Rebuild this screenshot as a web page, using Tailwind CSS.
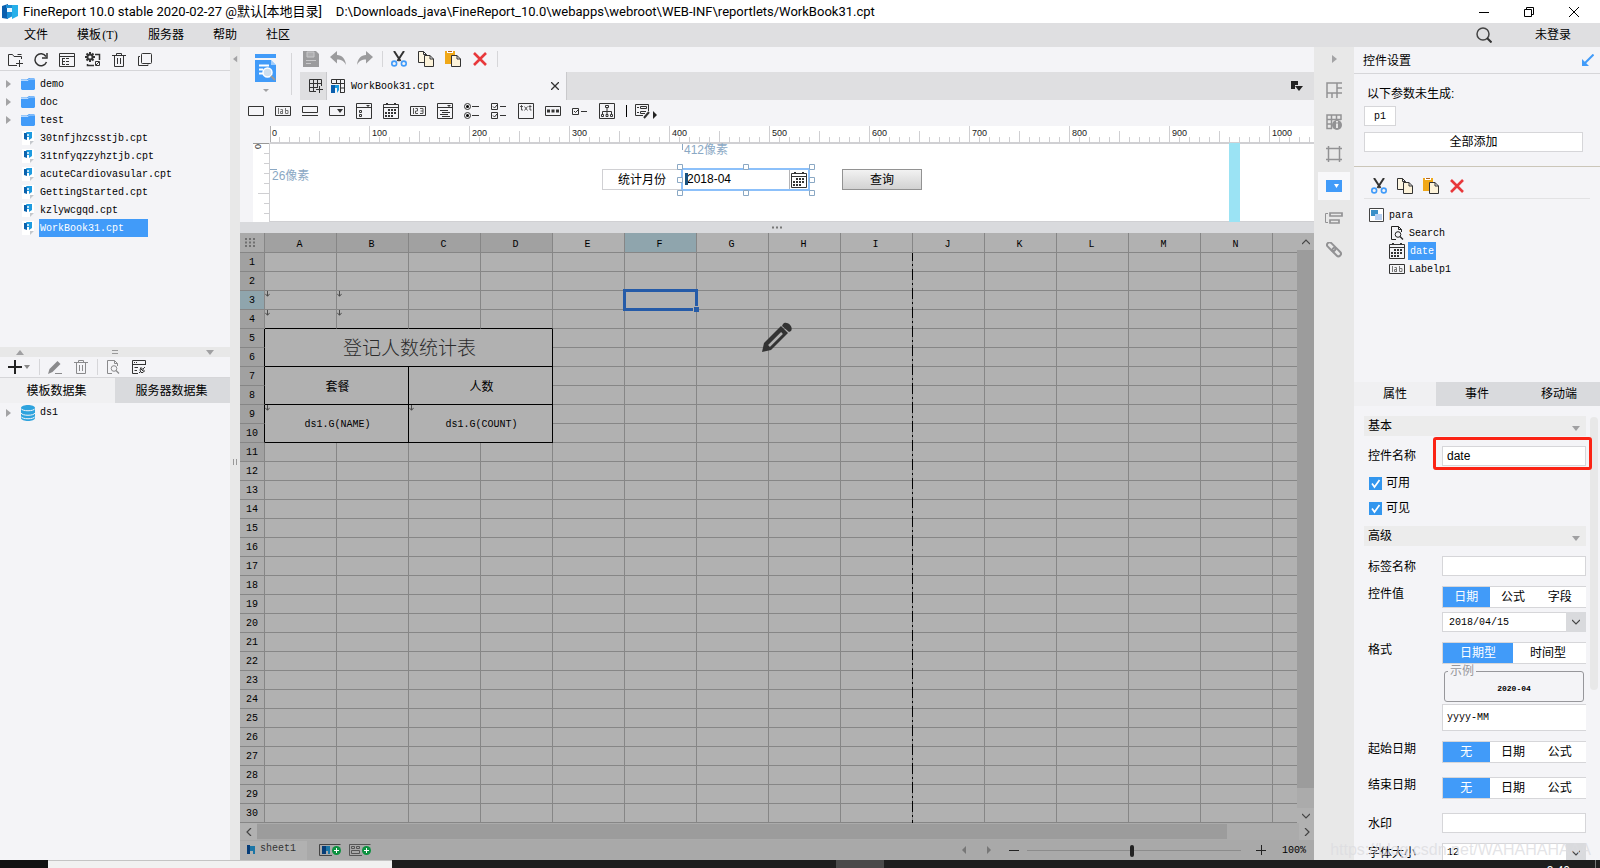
<!DOCTYPE html>
<html lang="zh-CN">
<head>
<meta charset="utf-8">
<title>FineReport 10.0</title>
<script src="https://cdn.jsdelivr.net/npm/@tailwindcss/browser@4"></script>
</head>
<body class="h-screen overflow-hidden flex flex-col bg-[#f4f4f7] text-black text-[12px] leading-[14px] font-['Liberation_Sans','Noto_Sans_CJK_SC',sans-serif]">

<svg class="hidden" aria-hidden="true">
  <symbol id="logo" viewBox="0 0 16 16"><path d="M0 2l6-2v4H5v5h1v6l-6-1z" fill="#0a5fae"/><path d="M4 1h12v3H4z" fill="#1b8fd6"/><path d="M5 8h6v4l-6 3z" fill="#1b8fd6"/><path d="M5 4h5v4H5z" fill="#e9f6ff"/><path d="M10 1h6v11l-6 3z" fill="#27b0ea"/></symbol>
  <symbol id="folder" viewBox="0 0 14 12"><path d="M0 1.5h6l2-1.5h5l1 1v10l-1 1H1l-1-1z" fill="#419bf9"/><path d="M0 2.500h7l1.500-1.500h5.500" fill="none" stroke="#d5e9ff" stroke-width=".8"/></symbol>
  <symbol id="cpt" viewBox="0 0 12 14"><path d="M0 0h12v10l-4 4H0z" fill="#fff"/><path d="M8 14v-4h4z" fill="#c4c7cc"/><path d="M2 2h3v7l-3-1z" fill="#0a62ae"/><path d="M4 1h6v6l-3 2V6H5V3z" fill="#1d9be0"/><path d="M5 3h2v2H5z" fill="#bfe4fa"/></symbol>
  <symbol id="tri" viewBox="0 0 6 8"><path d="M1 0l5 4-5 4z" fill="#a3a3a5"/></symbol>
  <symbol id="down" viewBox="0 0 8 5"><path d="M0 0h8L4 5z" fill="#a0a0a2"/></symbol>
  <symbol id="cut" viewBox="0 0 16 16"><path d="M3 0l6.500 10M13 0L6.500 10" stroke="#333" stroke-width="2" fill="none"/><circle cx="3.200" cy="12.500" r="2.400" fill="none" stroke="#419bf9" stroke-width="1.600"/><circle cx="12.800" cy="12.500" r="2.400" fill="none" stroke="#419bf9" stroke-width="1.600"/></symbol>
  <symbol id="copy" viewBox="0 0 16 16"><path d="M.5.5h5l3 3v8h-8zM5.500.5v3h3" fill="#fdf6e3" stroke="#333"/><path d="M6.500 4.500h5.500l3.500 3.500v7.500h-9zM12 4.500V8h3.500" fill="#fdf3da" stroke="#333"/></symbol>
  <symbol id="paste" viewBox="0 0 16 16"><path d="M0 0h10v13H0z" fill="#f0a818"/><path d="M2 0h6v2H2z" fill="#fff"/><path d="M3 0h4v1H3z" fill="#b5651d"/><path d="M6.500 4.500h5.500l3.500 3.500v7.500h-9zM12 4.500V8h3.500" fill="#fdf3da" stroke="#333"/></symbol>
  <symbol id="del" viewBox="0 0 14 14"><path d="M1 1l12 12M13 1L1 13" stroke="#e8383b" stroke-width="2.600"/></symbol>
  <symbol id="cal" viewBox="0 0 16 16"><path d="M.5 1.500h15v14H.5zM.5 4.500h15" fill="none" stroke="#333"/><path d="M3 0h2v2H3zM11 0h2v2h-2z" fill="#333"/><path d="M5 7h8M2 10h11M2 13h8" stroke="#333" stroke-width="2" stroke-dasharray="2 1"/></symbol>
  <symbol id="lab" viewBox="0 0 16 10"><path d="M.5.5h15v9H.5z" fill="none" stroke="#333"/><path d="M3.500 2v6M5.500 3.500h2V8M8 7.500H5.500v-2H7M10.500 2v5.500H13v-3h-2" fill="none" stroke="#777"/></symbol>
  <symbol id="trash" viewBox="0 0 14 14"><path d="M0 2.500h14M4.500 2V.5h5V2M2.500 3v10.500h9V3M5.500 5v6M8.500 5v6" fill="none" stroke="currentColor"/></symbol>
  <symbol id="docsearch" viewBox="0 0 14 14"><path d="M6 13.500H1.500V.5h7l3 3V6M8.500.5v3h3" fill="none" stroke="currentColor"/><circle cx="8" cy="8.500" r="2.800" fill="none" stroke="currentColor"/><path d="M10 10.500l3 3" stroke="currentColor" stroke-width="1.300"/></symbol>
  <symbol id="chev" viewBox="0 0 8 6"><path d="M0 1l4 4 4-4" fill="none" stroke="#444" stroke-width="1.200"/></symbol>
  <symbol id="arrowdown" viewBox="0 0 5 6"><path d="M2.500 0v5M.3 2.800L2.500 5.300l2.200-2.500" fill="none" stroke="#4c4c4c"/></symbol>
</svg>

<header class="shrink-0">
  <div class="h-[23px] bg-white flex items-center pl-[2px] pr-[21px] font-['Roboto','Noto_Sans_CJK_SC',sans-serif] text-[13px]">
    <svg class="w-4 h-4"><use href="#logo"/></svg>
    <h1 class="ml-[5px]">FineReport 10.0 stable 2020-02-27 @默认[本地目录]</h1>
    <span class="ml-[14px]">D:\Downloads_java\FineReport_10.0\webapps\webroot\WEB-INF\reportlets/WorkBook31.cpt</span>
    <div class="ml-auto flex items-center gap-[35px]">
      <button aria-label="最小化"><svg width="10" height="10"><path d="M0 5.500h10" stroke="#000"/></svg></button>
      <button aria-label="还原"><svg width="10" height="10"><path d="M.5 2.500h7v7h-7zM2.500 2V.5h7v7H8" fill="none" stroke="#000"/></svg></button>
      <button aria-label="关闭"><svg width="10" height="10"><path d="M0 0l10 10M10 0L0 10" stroke="#000"/></svg></button>
    </div>
  </div>
  <nav class="h-6 bg-[#dfdfe1] flex items-center gap-[29px] pl-6 pr-[29px]">
    <button>文件</button>
    <button class="flex">模板<span class="text-[12px] font-['Liberation_Serif'] w-[18px] text-center">(T)</span></button>
    <button>服务器</button>
    <button>帮助</button>
    <button>社区</button>
    <button class="ml-auto" aria-label="搜索"><svg width="16" height="16"><circle cx="7" cy="7" r="6" fill="none" stroke="#444" stroke-width="1.500"/><path d="M11 11l4.500 4.500" stroke="#333" stroke-width="2"/></svg></button>
    <button class="ml-[14px]">未登录</button>
  </nav>
</header>

<div class="flex-1 min-h-0 flex">

  <!-- Template and data set trees -->
  <aside class="w-[230px] shrink-0 flex flex-col">
    <div class="h-6 shrink-0 border-b border-[#d6d6d9] flex items-center gap-[10px] pl-[7px] pt-[2px] text-[#333]">
      <button aria-label="新建文件夹"><svg width="16" height="16"><path d="M10 13.500H1.500v-11h4l1.500 2h7.500V7M14.500 2.500h-4" fill="none" stroke="#333"/><path d="M9 11.500h7M12.500 8v7" stroke="#333"/></svg></button>
      <button aria-label="刷新"><svg width="16" height="16"><path d="M13 4.500A6 6 0 1 0 13.500 10" fill="none" stroke="#333" stroke-width="1.500"/><path d="M14 1v5H9" fill="none" stroke="#333" stroke-width="1.500"/></svg></button>
      <button aria-label="目录"><svg width="16" height="16"><path d="M.5 1.500h15v13H.5zM.5 4.500h15M3 6.500h3M3.500 7v5.500M3 9.500h3M3 12.500h3M7 6.500h3M7 9.500h3M7 12.500h3" fill="none" stroke="#333"/></svg></button>
      <button aria-label="配置"><svg width="16" height="16"><path d="M5 0v10M0 5h10M1.500 1.500l7 7M8.500 1.500l-7 7" stroke="#333" stroke-width="2"/><circle cx="5" cy="5" r="3.500" fill="#333"/><circle cx="5" cy="5" r="1.600" fill="#f4f4f7"/><path d="M10 2.500h4.500V8M2.500 12v1.500H9" fill="none" stroke="#333" stroke-width="1.500"/><path d="M10.500 9.500h4v4h-4zM11 13l3-3" fill="none" stroke="#333"/></svg></button>
      <button aria-label="删除"><svg class="w-[14px] h-[14px] mx-px"><use href="#trash"/></svg></button>
      <button aria-label="复制"><svg width="16" height="16"><rect x="4.500" y="1.500" width="10" height="10" rx="1" fill="none" stroke="#333"/><path d="M3 4.500H1.500v9h9.500v-1" fill="none" stroke="#333"/></svg></button>
    </div>
    <div class="flex-[276] min-h-0">
      <ul class="pt-1 pl-[5px] font-['Liberation_Mono'] text-[10px] leading-[18px] [&_span]:h-[18px] [&_span]:pt-px [&_span]:px-px">
        <li class="flex items-center h-[18px]"><svg class="w-[6px] h-2 mr-[10px]"><use href="#tri"/></svg><svg class="w-[14px] h-3 mr-[4px]"><use href="#folder"/></svg><span>demo</span></li>
        <li class="flex items-center h-[18px]"><svg class="w-[6px] h-2 mr-[10px]"><use href="#tri"/></svg><svg class="w-[14px] h-3 mr-[4px]"><use href="#folder"/></svg><span>doc</span></li>
        <li class="flex items-center h-[18px]"><svg class="w-[6px] h-2 mr-[10px]"><use href="#tri"/></svg><svg class="w-[14px] h-3 mr-[4px]"><use href="#folder"/></svg><span>test</span></li>
        <li class="flex items-center h-[18px] pl-[17px]"><svg class="w-3 h-[14px] mr-[5px]"><use href="#cpt"/></svg><span>30tnfjhzcsstjb.cpt</span></li>
        <li class="flex items-center h-[18px] pl-[17px]"><svg class="w-3 h-[14px] mr-[5px]"><use href="#cpt"/></svg><span>31tnfyqzzyhztjb.cpt</span></li>
        <li class="flex items-center h-[18px] pl-[17px]"><svg class="w-3 h-[14px] mr-[5px]"><use href="#cpt"/></svg><span>acuteCardiovasular.cpt</span></li>
        <li class="flex items-center h-[18px] pl-[17px]"><svg class="w-3 h-[14px] mr-[5px]"><use href="#cpt"/></svg><span>GettingStarted.cpt</span></li>
        <li class="flex items-center h-[18px] pl-[17px]"><svg class="w-3 h-[14px] mr-[5px]"><use href="#cpt"/></svg><span>kzlywcgqd.cpt</span></li>
        <li class="flex items-center h-[18px] pl-[17px]"><svg class="w-3 h-[14px] mr-[5px]"><use href="#cpt"/></svg><span class="w-[109px] bg-[#419bf9] text-white">WorkBook31.cpt</span></li>
      </ul>
    </div>
    <div class="h-[10px] shrink-0 bg-[#e8e8e8] flex items-center justify-between px-4">
      <svg class="w-2 h-[5px] rotate-180"><use href="#down"/></svg>
      <svg width="6" height="4"><path d="M0 .5h6M0 3.500h6" stroke="#999"/></svg>
      <svg class="w-2 h-[5px]"><use href="#down"/></svg>
    </div>
    <div class="flex-[503] min-h-0 flex flex-col">
      <div class="h-[21px] shrink-0 border-b border-[#d6d6d9] flex items-center pl-2 text-[#8a8a8c]">
        <button aria-label="添加" class="flex items-center gap-[2px] w-[31px]"><svg width="14" height="14"><path d="M7 0v14M0 7h14" stroke="#222" stroke-width="2"/></svg><svg class="w-[6px] h-1" viewBox="0 0 6 4"><path d="M0 0h6L3 4z" fill="#888"/></svg></button>
        <span class="w-px h-4 bg-[#d6d6d9]"></span>
        <button aria-label="编辑" class="ml-2"><svg width="15" height="15"><path d="M0 14l1.500-5L9.500 1l3 3-8 8z" fill="#8a8a8c"/><path d="M7 13.500h7" stroke="#8a8a8c"/></svg></button>
        <button aria-label="删除" class="ml-[11px]"><svg class="w-[14px] h-[14px]"><use href="#trash"/></svg></button>
        <span class="ml-[9px] w-px h-4 bg-[#d6d6d9]"></span>
        <button aria-label="预览" class="ml-2"><svg class="w-[14px] h-[14px]"><use href="#docsearch"/></svg></button>
        <button aria-label="数据连接" class="ml-[12px]"><svg width="15" height="14"><path d="M6 13.500H.5V.5h13V5M.5 4.500h13M2 2.500h1M4 2.500h1M2.500 7.500H6M2.500 10.500H5" fill="none" stroke="#333"/><path d="M7 13l2-2M8.500 8.500l3 3M13 7l-2 2M9 7.500l3.500 3.500-1.500 1.500H9L8 10z" fill="none" stroke="#333"/></svg></button>
      </div>
      <div class="h-[25px] shrink-0 flex text-[12px]">
        <button class="flex-1 bg-[#f0f0f2] pr-[2px]">模板数据集</button>
        <button class="flex-1 bg-[#d9dadd] pr-[2px]">服务器数据集</button>
      </div>
      <ul class="pl-[5px] font-['Liberation_Mono'] text-[10px]">
        <li class="flex items-center h-[19px]"><svg class="w-[6px] h-2 mr-[10px]"><use href="#tri"/></svg><svg class="mr-[5px]" width="14" height="16"><path d="M0 3c0-4 14-4 14 0v10c0 4-14 4-14 0z" fill="#2ea3de"/><path d="M0 3.500c1 3 13 3 14 0M0 8c1 3 13 3 14 0M0 11.500c1 3 13 3 14 0" fill="none" stroke="#f4f4f7"/></svg>ds1</li>
      </ul>
    </div>
  </aside>
  <div class="w-[10px] shrink-0 bg-[#e8e8e8] flex flex-col items-center justify-between pt-2">
    <svg class="w-[5px] h-2 rotate-180"><use href="#tri"/></svg>
    <svg width="4" height="6"><path d="M.5 0v6M3.500 0v6" stroke="#999"/></svg>
    <span></span>
  </div>

  <!-- Report designer -->
  <main class="flex-1 min-w-0 flex flex-col">
    <div class="h-[53px] shrink-0 flex">
      <button aria-label="预览" class="w-[51px] shrink-0 flex flex-col items-center pt-[7px]"><svg width="21" height="38"><path d="M0 0h21v4H0z" fill="#419bf9"/><path d="M0 6h16l5 5v17H0z" fill="#419bf9"/><path d="M16 6v5h5" fill="#fff" opacity=".5"/><path d="M4 11.500h10M4 15.500h4M4 19.500h4" stroke="#fff" stroke-width="2"/><circle cx="12.500" cy="18.500" r="4.500" fill="#cfdfee" stroke="#fff" stroke-width="1.500"/><path d="M16 22l4 4" stroke="#999" stroke-width="2"/><path d="M8 35h6l-3 3z" fill="#a0a0a2"/></svg></button>
      <span class="w-px h-[42px] mt-[6px] bg-[#d6d6d9]"></span>
      <div class="ml-2 flex-1 min-w-0 flex flex-col">
        <div class="h-[25px] flex items-center pl-[3px] pb-px">
          <button aria-label="保存"><svg width="16" height="16"><path d="M0 0h13l3 3v13H0z" fill="#9b9b9d"/><path d="M4 1h7v5H4zM3 9.500h10M3 12.500h5" fill="#aeaeb0" stroke="#c9c9cb"/></svg></button>
          <button aria-label="撤销" class="ml-[11px]"><svg width="16" height="16"><path d="M7 0v4c5 0 8.500 4 9 10-2-4-4.500-5.500-9-5.500v4L0 6z" fill="#9b9b9d"/></svg></button>
          <button aria-label="重做" class="ml-[11px]"><svg width="16" height="16"><path d="M9 0v4C4 4 .5 8 0 14c2-4 4.500-5.500 9-5.500v4L16 6z" fill="#9b9b9d"/></svg></button>
          <span class="ml-[9px] w-px h-4 bg-[#d6d6d9]"></span>
          <button aria-label="剪切" class="ml-2"><svg class="w-4 h-4"><use href="#cut"/></svg></button>
          <button aria-label="复制" class="ml-[11px]"><svg class="w-4 h-4"><use href="#copy"/></svg></button>
          <button aria-label="粘贴" class="ml-[11px]"><svg class="w-4 h-4"><use href="#paste"/></svg></button>
          <button aria-label="删除" class="ml-3"><svg class="w-[14px] h-[14px]"><use href="#del"/></svg></button>
          <span class="ml-[10px] w-px h-4 bg-[#d6d6d9]"></span>
        </div>
        <div class="h-7 bg-[#dfdfe1] flex items-center">
          <button aria-label="新建模板" class="w-[26px] pl-[9px]"><svg width="15" height="15"><path d="M7 12.500H.5v-12h12V7M.5 4.500h12M.5 8.500h8M4.500.5v12M8.500.5V9" fill="none" stroke="#333"/><path d="M7 10.500h7M10.500 7v7" stroke="#333"/></svg></button>
          <div class="w-[241px] h-7 bg-[#f4f4f7] border-l border-r border-[#c9c9cc] flex items-center pl-1 pr-[7px] font-['Liberation_Mono'] text-[10px]">
            <svg width="14" height="14"><path d="M.5 4V.5h13v13H9M.5 4.500h13M5.500.5V5M9.500.5v13M9 9h4.500" fill="none" stroke="#333"/><path d="M0 6h4v8H0z" fill="#0a5fae"/><path d="M4 6h4v5L6 14V9H4z" fill="#1b9be0"/></svg>
            <span class="ml-[6px] pt-px">WorkBook31.cpt</span>
            <button class="ml-auto" aria-label="关闭标签"><svg width="8" height="8"><path d="M0 0l8 8M8 0L0 8" stroke="#333" stroke-width="1.300"/></svg></button>
          </div>
          <button aria-label="标签列表" class="ml-auto mr-[11px]"><svg width="12" height="10"><path d="M0 0h7v4H4v4H0z" fill="#222"/><path d="M4 5h8L8 10z" fill="#222"/></svg></button>
        </div>
      </div>
    </div>

    <div class="h-[26px] shrink-0 flex items-center gap-[11px] pl-2 pb-[4px] [&>button]:w-4 [&>button]:shrink-0">
      <button aria-label="文本"><svg width="16" height="10"><path d="M.5.5h15v9H.5z" fill="none" stroke="#333"/></svg></button>
      <button aria-label="标签"><svg class="w-4 h-[10px]"><use href="#lab"/></svg></button>
      <button aria-label="按钮"><svg width="16" height="10"><path d="M.5.5h15v6H.5zM0 9.500h16" fill="none" stroke="#333"/></svg></button>
      <button aria-label="下拉框"><svg width="16" height="10"><path d="M.5.5h15v9H.5z" fill="none" stroke="#333"/><path d="M8 3h6l-3 4z" fill="#333"/></svg></button>
      <button aria-label="下拉复选框"><svg width="16" height="16"><path d="M.5.5h15v15H.5zM.5 4.500h15M3.500 7.500h2v2h-2zM3.500 11.500h2v2h-2z" fill="none" stroke="#333"/><path d="M10 2h4l-2 2z" fill="#333"/></svg></button>
      <button aria-label="日期"><svg class="w-4 h-4"><use href="#cal"/></svg></button>
      <button aria-label="数字"><svg width="16" height="10"><path d="M.5.5h15v9H.5z" fill="none" stroke="#333"/><path d="M3.500 2v6M5.500 2.500h2v2.500h-2v2.500H8M10 2.500h3v5h-3M10.500 5H13" fill="none" stroke="#555"/></svg></button>
      <button aria-label="下拉树"><svg width="16" height="16"><path d="M.5.5h15v15H.5zM.5 4.500h15M3 7.500h8M5 9.500h8M3 11.500h8M5 13.500h8" fill="none" stroke="#333"/><path d="M10 2h4l-2 2z" fill="#333"/></svg></button>
      <button aria-label="单选按钮组"><svg width="16" height="16"><circle cx="3.500" cy="3.500" r="3" fill="none" stroke="#333"/><circle cx="3.500" cy="3.500" r="1.500"/><circle cx="3.500" cy="12.500" r="3" fill="none" stroke="#333"/><circle cx="3.500" cy="12.500" r="1.500"/><path d="M8 3.500h7M8 12.500h7" stroke="#333"/></svg></button>
      <button aria-label="复选框组"><svg width="16" height="16"><path d="M.5.5h6v6h-6zM.5 9.500h6v6h-6zM2 3.500l1.500 1.500L6 2M2 12.500L3.500 14 6 11M9 3.500h6M9 12.500h6" fill="none" stroke="#333"/></svg></button>
      <button aria-label="文本域"><svg width="16" height="16"><path d="M.5.5h15v15H.5z" fill="none" stroke="#333"/><path d="M3.500 2v5H5M2 3.500h3M6.500 3.500l3 4M9.500 3.500l-3 4M12 2v5h1.500M10.500 3.500h3" fill="none" stroke="#444" stroke-width=".9"/></svg></button>
      <button aria-label="密码"><svg width="16" height="10"><path d="M.5.5h15v9H.5z" fill="none" stroke="#333"/><path d="M2 5h3M6.500 5h3M11 5h3" stroke="#333" stroke-width="3"/></svg></button>
      <button aria-label="复选框"><svg width="16" height="10"><path d="M.5 2.500h6v6h-6zM2 5l1.500 1.500L6 4M9 5.500h6" fill="none" stroke="#333"/></svg></button>
      <button aria-label="视图树"><svg width="16" height="16"><path d="M.5.5h15v15H.5zM6.500 2.500h3v2h-3zM8 5v6M3.500 11V8.500h9V11M2.500 11.500h2v2h-2zM7 11.500h2v2H7zM11.500 11.500h2v2h-2z" fill="none" stroke="#333"/></svg></button>
      <span class="w-px h-3 bg-black shrink-0 -mr-[3px]"></span>
      <button aria-label="自定义控件"><svg width="16" height="16" class="overflow-visible"><path d="M8 12.500H.5V1.500h13V8M2 4.500h2M5.500 3.500h6v2h-6zM2 9.500h2M11 8.500H5.500v2H10" fill="none" stroke="#333"/><path d="M9 15l5-6" stroke="#333" stroke-width="2"/><path d="M18 8l4 4-4 4z" fill="#222"/></svg></button>
    </div>

    <!-- Parameter pane with rulers -->
    <div class="h-[96px] shrink-0 flex">
      <div class="w-[30px] shrink-0 pt-[17px] pl-[13px]">
        <div class="h-[79px] bg-white border-r border-[#d0d0d3] relative">
          <svg class="absolute inset-0 w-full h-full" aria-hidden="true"><path d="M0 .5h17" stroke="#999"/><path d="M11 10.500h6M11 20.500h6M11 30.500h6M11 40.500h6M5 50.500h12M11 60.500h6M11 70.500h6" stroke="#cfcfd2"/></svg>
          <span class="absolute left-[2px] top-[1px] text-[9px] leading-[6px] [writing-mode:vertical-rl] rotate-180 text-[#333]">0</span>
        </div>
      </div>
      <div class="flex-1 min-w-0 bg-white flex flex-col overflow-hidden">
        <div class="h-[17px] shrink-0 relative border-b border-[#d0d0d3]">
          <svg class="absolute inset-0 w-full h-full" aria-hidden="true">
            <defs><pattern id="ticks" width="100" height="17" patternUnits="userSpaceOnUse" x="-1"><path d="M.5 0v17" stroke="#cfcfd2"/><path d="M50.500 5v12" stroke="#cfcfd2"/><path d="M10.500 11v6M20.500 11v6M30.500 11v6M40.500 11v6M60.500 11v6M70.500 11v6M80.500 11v6M90.500 11v6" stroke="#cfcfd2"/></pattern></defs>
            <rect width="100%" height="17" fill="url(#ticks)"/>
            <path d="M.5 0v17" stroke="#b0b0b2"/>
          </svg>
          <div class="relative flex pl-[2px] pt-[2px] text-[9px] leading-[10px] text-[#222] [&>span]:w-[100px] [&>span]:shrink-0">
            <span>0</span><span>100</span><span>200</span><span>300</span><span>400</span><span>500</span><span>600</span><span>700</span><span>800</span><span>900</span><span>1000</span>
          </div>
        </div>
        <div class="flex-1 relative border-t border-b border-[#d0d0d3]">
          <span class="absolute left-0 top-[25px] w-[7px] h-px bg-[#8aa8c4]"></span>
          <span class="absolute left-[2px] top-[25px] text-[#8aa8c4]">26像素</span>
          <span class="absolute left-[412px] top-0 w-px h-[6px] bg-[#8aa8c4]"></span>
          <span class="absolute left-[414px] top-[-1px] text-[#8aa8c4]">412像素</span>
          <label for="pdate" class="absolute left-[332px] top-[25px] w-[80px] h-[21px] border border-[#d0d0d3] flex items-center justify-center">统计月份</label>
          <div class="absolute left-[411px] top-[24px] w-[129px] h-[23px] border-2 border-[#8cc0fa] bg-white flex items-center">
            <input id="pdate" value="2018-04" class="w-[107px] h-[19px] px-[4px] pb-px bg-transparent outline-none border-r border-[#b4b4b6]">
            <span class="absolute left-[2px] top-[3px] w-[3px] h-3 bg-[#17517f]"></span>
            <svg class="w-4 h-4 ml-px"><use href="#cal"/></svg>
          </div>
          <svg class="absolute left-[407px] top-[20px] overflow-visible" width="138" height="32" aria-hidden="true"><path d="M.5.5h5v5h-5zM66.500.5h5v5h-5zM132.500.5h5v5h-5zM.5 13.500h5v5h-5zM132.500 13.500h5v5h-5zM.5 26.500h5v5h-5zM66.500 26.500h5v5h-5zM132.500 26.500h5v5h-5z" fill="#fff" stroke="#8aa8c4"/></svg>
          <button class="absolute left-[572px] top-[25px] w-[80px] h-[21px] border border-[#929292] bg-linear-to-b from-[#f2f2f2] to-[#d2d2d2] flex items-center justify-center">查询</button>
          <span class="absolute left-[959px] top-[-1px] bottom-[-1px] w-[11px] bg-[#9be3f4]"></span>
        </div>
      </div>
    </div>
    <div class="h-[11px] shrink-0 bg-[#d9dadd] flex items-center justify-center"><svg width="11" height="3"><path d="M0 1.500h11" stroke="#777" stroke-width="2" stroke-dasharray="2 2"/></svg></div>

    <!-- Sheet -->
    <div class="flex-1 min-h-0 flex bg-[#b1b1b1] relative">
      <div class="flex-1 min-w-0 overflow-hidden">
        <table class="w-full table-fixed border-separate border-spacing-0 font-['Liberation_Mono','Noto_Sans_CJK_SC',monospace] text-[10px] leading-[14px] [&_td]:text-center">
          <colgroup id="cols"></colgroup>
          <thead><tr id="head" class="h-5"></tr></thead>
          <tbody id="grid"></tbody>
        </table>
      </div>
      <div class="w-[17px] shrink-0 bg-[#ababab] flex flex-col items-center">
        <button aria-label="向上" class="h-[17px] w-full flex items-center justify-center bg-[#b1b1b1]"><svg class="w-2 h-[6px] rotate-180"><use href="#chev"/></svg></button>
        <div class="flex-1 w-full bg-[#9c9c9c]"></div>
        <button aria-label="向下" class="mt-[20px] h-[15px] w-full flex items-center justify-center bg-[#b1b1b1]"><svg class="w-2 h-[6px]"><use href="#chev"/></svg></button>
      </div>
      <svg class="absolute left-[521px] top-[88px]" width="32" height="32" viewBox="0 0 32 32" aria-hidden="true"><path d="M1 31l2-9L20 5l7 7-17 17z" fill="#333"/><path d="M8 25L21 12" stroke="#b1b1b1" stroke-width="2.500"/><path d="M22 3c3-4 11 2 8 7l-2 1-7-6z" fill="#333"/></svg>
    </div>
    <div class="h-[17px] shrink-0 bg-[#ababab] flex items-center">
      <button aria-label="向左" class="w-[17px] h-[17px] flex items-center justify-center bg-[#b1b1b1]"><svg class="w-2 h-[6px] rotate-90"><use href="#chev"/></svg></button>
      <div class="flex-1 h-[15px] bg-[#9c9c9c]"></div>
      <button aria-label="向右" class="ml-[72px] w-[15px] h-[17px] flex items-center justify-center bg-[#b1b1b1]"><svg class="w-2 h-[6px] -rotate-90"><use href="#chev"/></svg></button>
    </div>
    <div class="h-5 shrink-0 bg-[#a9a9a9] flex items-center pr-[8px]">
      <button class="w-[67px] h-[19px] bg-[#b1b1b1] flex items-center pl-[7px] pb-[2px] font-['Liberation_Mono'] text-[10px] text-[#333]"><svg width="8" height="9" class="mr-[5px]"><path d="M0 0h3v9H0z" fill="#063d78"/><path d="M3 1h5v8H6V6H3z" fill="#1c76a6"/></svg>sheet1</button>
      <button aria-label="新增普通报表" class="ml-3"><svg width="23" height="14"><path d="M13 12.500H.5V1.500h21" fill="none" stroke="#444"/><path d="M3 3h4v8H3z" fill="#063d78"/><path d="M7 3h4v8H9V8H7z" fill="#1c76a6"/><circle cx="17.500" cy="7.500" r="4.500" fill="#0c9240"/><path d="M17.500 5v5M15 7.500h5" stroke="#fff"/></svg></button>
      <button aria-label="新增聚合报表" class="ml-[7px]"><svg width="23" height="14"><path d="M13 12.500H.5V1.500h21M2.500 3.500h3v2h-3zM7.500 3.500h3v2h-3zM2.500 7.500h8v3h-8z" fill="none" stroke="#555"/><circle cx="17.500" cy="7.500" r="4.500" fill="#0c9240"/><path d="M17.500 5v5M15 7.500h5" stroke="#fff"/></svg></button>
      <button aria-label="上一个" class="ml-auto"><svg width="4" height="8"><path d="M4 0v8L0 4z" fill="#777"/></svg></button>
      <button aria-label="下一个" class="ml-[21px]"><svg width="4" height="8"><path d="M0 0v8l4-4z" fill="#777"/></svg></button>
      <button aria-label="缩小" class="ml-[18px]"><svg width="10" height="10"><path d="M0 5.500h10" stroke="#222"/></svg></button>
      <input type="range" min="0" max="100" value="49" aria-label="缩放" class="ml-2 w-[214px] h-3 appearance-none bg-transparent [&::-webkit-slider-runnable-track]:h-px [&::-webkit-slider-runnable-track]:bg-[#8c8c8c] [&::-webkit-slider-thumb]:appearance-none [&::-webkit-slider-thumb]:w-1 [&::-webkit-slider-thumb]:h-3 [&::-webkit-slider-thumb]:-mt-[5px] [&::-webkit-slider-thumb]:rounded-xs [&::-webkit-slider-thumb]:bg-[#222]">
      <button aria-label="放大" class="ml-[15px]"><svg width="10" height="10"><path d="M0 5.500h10M5.500 0v10" stroke="#222"/></svg></button>
      <span class="ml-4 pt-px font-['Liberation_Mono'] text-[10px]">100%</span>
    </div>
  </main>

  <!-- Vertical tool strip -->
  <div class="w-10 shrink-0 bg-[#e8e8e8] flex flex-col items-center pt-2 text-[#929294]">
    <button aria-label="收起" class="h-2"><svg class="w-[6px] h-2"><use href="#tri"/></svg></button>
    <button aria-label="单元格元素" class="mt-[13px] w-8 h-7 flex items-center justify-center"><svg width="16" height="16" fill="none" stroke="currentColor" stroke-width="1.500"><path d="M1 16V1h15M1 11h10V1M6 11v5M11 11v5M11 6h5M11 11h5"/></svg></button>
    <button aria-label="单元格属性" class="mt-1 w-8 h-7 flex items-center justify-center"><svg width="16" height="16" fill="none" stroke="currentColor"><path d="M6 14.500H1V1h14v5M1 5.500h14M1 10h5M5.500 1v14M10.500 1v5" stroke-width="1.500"/><circle cx="11" cy="11" r="5" fill="#929294" stroke="none"/><path d="M11 7v1.500M11 9.500V14" stroke="#fff" stroke-width="1.500"/></svg></button>
    <button aria-label="悬浮元素" class="mt-1 w-8 h-7 flex items-center justify-center"><svg width="16" height="16" fill="none" stroke="currentColor"><path d="M2.500 0v16M13.500 0v16M0 2.500h16M0 13.500h16" stroke-width="1.500"/></svg></button>
    <button aria-label="控件设置" class="mt-1 w-8 h-7 flex items-center justify-center bg-[#f8f8fa]"><svg width="16" height="12"><path d="M0 0h16v12H0z" fill="#419bf9"/><path d="M8 4h5l-2.500 4z" fill="#fff"/></svg></button>
    <button aria-label="条件属性" class="mt-1 w-8 h-7 flex items-center justify-center"><svg width="18" height="12" fill="none" stroke="currentColor"><path d="M3 1.500H.5v9H3"/><path d="M5 1h12v3H5zM5 8h9v3H5z" stroke-width="1.700"/></svg></button>
    <button aria-label="超级链接" class="mt-1 w-8 h-7 flex items-center justify-center"><svg width="16" height="16" fill="none" stroke="currentColor" stroke-width="2"><rect x="-1" y="3" width="10" height="5" rx="2.500" transform="rotate(45 5 5) translate(1 -1)"/><rect x="6" y="8" width="10" height="5" rx="2.500" transform="rotate(45 11 11) translate(-1 0)"/></svg></button>
  </div>

  <!-- Widget settings -->
  <aside class="w-[246px] shrink-0 flex flex-col relative">
    <div class="h-[27px] shrink-0 border-b border-[#d6d6d9] flex items-center justify-between pl-[9px] pr-[6px] pt-px">
      <h2>控件设置</h2>
      <button aria-label="弹出" class="pb-[2px]"><svg width="12" height="12"><path d="M11.500 .5L3 9" stroke="#419bf9" stroke-width="2"/><path d="M0 5v7h7z" fill="#419bf9"/></svg></button>
    </div>
    <div class="h-[93px] shrink-0 border-b border-[#cbc6b9] pt-[13px] pl-[10px] pr-[17px]">
      <p class="pl-[3px]">以下参数未生成:</p>
      <button class="mt-[5px] w-8 h-5 block bg-white border border-[#d6d6d9] pt-px font-['Liberation_Mono'] text-[10px]">p1</button>
      <button class="mt-[6px] w-full h-5 block bg-white border border-[#d6d6d9] leading-[18px]">全部添加</button>
    </div>
    <div class="ml-[10px] mr-[10px] h-8 shrink-0 border-b border-[#e2e2e4] flex items-center pl-[7px] pt-[6px] gap-[10px]">
      <button aria-label="剪切"><svg class="w-4 h-4"><use href="#cut"/></svg></button>
      <button aria-label="复制"><svg class="w-4 h-4"><use href="#copy"/></svg></button>
      <button aria-label="粘贴"><svg class="w-4 h-4"><use href="#paste"/></svg></button>
      <button aria-label="删除" class="ml-px"><svg class="w-[14px] h-[14px]"><use href="#del"/></svg></button>
    </div>
    <ul class="h-[183px] shrink-0 pt-[7px] pl-[15px] font-['Liberation_Mono'] text-[10px] leading-[18px] [&_span]:h-[18px] [&_span]:pt-px">
      <li class="flex items-center h-[18px]"><svg class="mr-[5px]" width="15" height="14"><path d="M.5.5h14v13H.5z" fill="#fff" stroke="#444"/><path d="M2 2h7v6H2z" fill="#3a8fc8"/><path d="M6 6h7v6H6z" fill="#b7d0f2"/></svg><span>para</span></li>
      <li class="flex items-center h-[18px] pl-5 text-[#222]"><svg class="w-4 h-[14px] mr-[3px]"><use href="#docsearch"/></svg><span class="px-px text-black">Search</span></li>
      <li class="flex items-center h-[18px] pl-5"><svg class="w-4 h-4 mr-[3px]"><use href="#cal"/></svg><span class="px-[2px] bg-[#419bf9] text-white">date</span></li>
      <li class="flex items-center h-[18px] pl-5"><svg class="w-4 h-[10px] mr-[3px]"><use href="#lab"/></svg><span class="px-px">Labelp1</span></li>
    </ul>
    <div class="h-6 shrink-0 flex">
      <button class="flex-1 bg-[#f0f0f2]">属性</button>
      <button class="flex-1 bg-[#d9dadd]">事件</button>
      <button class="flex-1 bg-[#d9dadd]">移动端</button>
    </div>
    <form class="flex-1 min-h-0 overflow-hidden pt-[10px] pl-[10px] relative">
      <div class="w-[222px]">
        <button type="button" class="w-full h-5 bg-[#ececec] flex items-center justify-between pl-1 pr-[6px]">基本<svg class="w-2 h-[5px] mt-1"><use href="#down"/></svg></button>
        <div class="mt-[10px] flex items-center pl-1 relative">
          <label for="wname" class="w-[74px]">控件名称</label>
          <input id="wname" value="date" class="flex-1 min-w-0 h-5 bg-white border border-[#d6d6d9] px-1 outline-none">
          <span class="absolute left-[69px] top-[-9px] w-[159px] h-[33px] border-3 border-[#fb2314] rounded-[3px] pointer-events-none z-10"></span>
        </div>
        <label class="mt-2 h-[18px] flex items-center pl-[5px] gap-1"><span class="relative w-[13px] h-[13px]"><input type="checkbox" checked class="block appearance-none w-[13px] h-[13px] bg-[#3296ee]"><svg class="absolute inset-0 pointer-events-none" width="13" height="13"><path d="M3 6.500L5.500 10 10.500 3" fill="none" stroke="#fff" stroke-width="1.700"/></svg></span>可用</label>
        <label class="mt-[7px] h-[18px] flex items-center pl-[5px] gap-1"><span class="relative w-[13px] h-[13px]"><input type="checkbox" checked class="block appearance-none w-[13px] h-[13px] bg-[#3296ee]"><svg class="absolute inset-0 pointer-events-none" width="13" height="13"><path d="M3 6.500L5.500 10 10.500 3" fill="none" stroke="#fff" stroke-width="1.700"/></svg></span>可见</label>
        <button type="button" class="mt-[9px] w-full h-5 bg-[#ececec] flex items-center justify-between pl-1 pr-[6px]">高级<svg class="w-2 h-[5px] mt-1"><use href="#down"/></svg></button>
        <div class="mt-[10px] flex items-center pl-1">
          <label for="wtag" class="w-[74px] pt-px">标签名称</label>
          <input id="wtag" class="flex-1 min-w-0 h-5 bg-white border border-[#d6d6d9] px-1 outline-none">
        </div>
        <div class="mt-[10px] flex items-start pl-1">
          <label for="wval" class="w-[74px] pt-px">控件值</label>
          <div class="flex-1 min-w-0">
            <div class="h-[22px] border border-r-0 border-[#d6d6d9] bg-white flex pr-[3px]"><button type="button" class="flex-1 bg-[#419bf9] text-white">日期</button><button type="button" class="flex-1">公式</button><button type="button" class="flex-1">字段</button></div>
            <div class="mt-1 h-5 relative"><select id="wval" class="appearance-none w-full h-5 bg-white border border-[#d6d6d9] pl-[6px] pt-px font-['Liberation_Mono'] text-[10px]"><option>2018/04/15</option></select><span class="absolute right-0 top-0 w-5 h-5 bg-[#d9dadd] flex items-center justify-center pointer-events-none"><svg class="w-2 h-[6px]"><use href="#chev"/></svg></span></div>
          </div>
        </div>
        <div class="mt-[10px] flex items-start pl-1">
          <label for="wfmt" class="w-[74px] pt-px">格式</label>
          <div class="flex-1 min-w-0">
            <div class="h-[22px] border border-r-0 border-[#d6d6d9] bg-white flex"><button type="button" class="flex-1 bg-[#419bf9] text-white">日期型</button><button type="button" class="flex-1 pr-[3px]">时间型</button></div>
            <fieldset class="mx-[2px] h-[38px] border border-[#97979b] rounded-[3px]"><legend class="ml-[3px] px-[2px] text-[#97979b] leading-[14px]">示例</legend><span class="block mt-[2px] text-center font-['Liberation_Mono'] font-bold text-[8px] leading-[18px]">2020-04</span></fieldset>
            <input id="wfmt" value="yyyy-MM" class="block mt-[2px] w-full h-[27px] bg-white border border-r-0 border-[#d6d6d9] px-1 font-['Liberation_Mono'] text-[10px] outline-none">
          </div>
        </div>
        <div class="mt-[10px] flex items-start pl-1">
          <span class="w-[74px] pt-px">起始日期</span>
          <div class="flex-1 h-[22px] border border-r-0 border-[#d6d6d9] bg-white flex pr-[3px]"><button type="button" class="flex-1 bg-[#419bf9] text-white">无</button><button type="button" class="flex-1">日期</button><button type="button" class="flex-1">公式</button></div>
        </div>
        <div class="mt-[14px] flex items-start pl-1">
          <span class="w-[74px] pt-px">结束日期</span>
          <div class="flex-1 h-[22px] border border-r-0 border-[#d6d6d9] bg-white flex pr-[3px]"><button type="button" class="flex-1 bg-[#419bf9] text-white">无</button><button type="button" class="flex-1">日期</button><button type="button" class="flex-1">公式</button></div>
        </div>
        <div class="mt-[14px] flex items-center pl-1">
          <label for="wmark" class="w-[74px] pt-px">水印</label>
          <input id="wmark" class="flex-1 min-w-0 h-5 bg-white border border-[#d6d6d9] px-1 outline-none">
        </div>
        <div class="mt-[10px] flex items-center pl-1">
          <label for="wsize" class="w-[74px]">字体大小</label>
          <div class="flex-1 h-5 relative"><select id="wsize" class="appearance-none w-full h-5 bg-white border border-[#d6d6d9] pl-1 font-['Liberation_Mono'] text-[10px]"><option>12</option></select><span class="absolute right-0 top-0 w-5 h-5 bg-[#d9dadd] flex items-center justify-center pointer-events-none"><svg class="w-2 h-[6px]"><use href="#chev"/></svg></span></div>
        </div>
      </div>
      <span class="absolute right-[2px] top-[11px] w-2 h-[273px] rounded-full bg-[#e8e8e8]"></span>
    </form>
    <span class="absolute right-[9px] bottom-px text-[16px] leading-[18px] text-[#dcdce0]/80 whitespace-nowrap pointer-events-none">https://blog.csdn.net/WAHAHAHAAA</span>
  </aside>
</div>

<footer class="h-2 shrink-0 bg-[#1e1e1e] flex overflow-hidden text-white">
  <span class="w-12 bg-[#111]"></span>
  <span class="w-[344px] bg-[#f1f1f1] border-t border-[#c4c4c4]"></span>
  <span class="ml-[444px] w-12 bg-[#4a4a4a]"></span>
  <time class="ml-auto mr-[25px] mt-[4px] text-[12px]">9:40</time>
  <span class="w-px bg-[#777] mr-1"></span>
</footer>

<script>
  const letters = 'ABCDEFGHIJKLMN'.split('');
  const line = 'border-r border-b border-[#868686]';
  const head = 'p-0 pt-[2px] font-normal';
  const pageEnd = '<svg class="absolute top-0 right-[-1px] w-px h-[19px]"><path d="M.5 0v19" stroke="#000" stroke-width="1" stroke-dasharray="8 3 2 3 3 0"/></svg>';
  const mark = '<svg class="absolute left-0 top-0 w-[5px] h-[6px]"><use href="#arrowdown"/></svg>';

  document.getElementById('cols').innerHTML =
    '<col class="w-[25px]">' + letters.map(() => '<col class="w-[72px]">').join('') + '<col>';

  document.getElementById('head').innerHTML =
    `<th class="${line} p-0 bg-[#aaaaaa]"><svg class="ml-[5px]" width="11" height="9"><path d="M0 1h11M0 4.500h11M0 8h11" stroke="#707070" stroke-width="2" stroke-dasharray="2 2"/></svg></th>` +
    letters.map((c, i) => `<th class="${line} p-0 pt-1 pr-[2px] font-normal ${c === 'F' ? 'bg-[#8fa5ad]' : i < 4 ? 'bg-[#a1a1a1]' : 'bg-[#b1b1b1]'}">${c}</th>`).join('') +
    '<th class="border-b border-[#868686]"></th>';

  const cell = 'border-r border-b border-black p-0';
  const block = {
    5: `<td colspan="4" rowspan="2" class="${cell} pt-1 pl-[2px] text-[19px] text-[#2a2a2a] font-light leading-[24px]">登记人数统计表</td>`,
    7: `<td colspan="2" rowspan="2" class="${cell} pt-1 pl-[2px] text-[12px]">套餐</td><td colspan="2" rowspan="2" class="${cell} pt-1 pl-[2px] text-[12px]">人数</td>`,
    9: `<td colspan="2" rowspan="2" class="${cell} pt-[2px] pl-[2px] relative">${mark}ds1.G(NAME)</td><td colspan="2" rowspan="2" class="${cell} pt-[2px] pl-[2px] relative">${mark}ds1.G(COUNT)</td>`
  };

  let rows = '';
  for (let r = 1; r <= 30; r++) {
    const inBlock = r >= 5 && r <= 10;
    const edge = inBlock ? 'border-r-black' : '';
    const tone = r === 3 ? 'bg-[#8fa5ad]' : r < 12 ? 'bg-[#a1a1a1]' : 'bg-[#adadad]';
    let row = `<th class="${line} ${head} ${edge} ${tone}">${r}</th>`;
    if (inBlock) row += block[r] || '';
    letters.forEach((c, i) => {
      if (inBlock && i < 4) return;
      const top = r === 4 && i < 4 ? 'border-b-black' : '';
      let inner = '';
      if ((r === 3 || r === 4) && i < 2) inner = mark;
      if (c === 'I') inner = pageEnd;
      if (r === 3 && c === 'F') inner = '<span class="absolute -inset-[2px] z-10 border-3 border-[#255ba8]"></span><span class="absolute -right-[3px] -bottom-[3px] z-10 w-[6px] h-[6px] bg-[#255ba8] border-l border-t border-[#b1b1b1]"></span>';
      row += `<td class="${line} p-0 ${top} ${inner ? 'relative' : ''}">${inner}</td>`;
    });
    rows += `<tr class="h-[19px]">${row}<td class="border-b border-[#868686] p-0"></td></tr>`;
  }
  document.getElementById('grid').innerHTML = rows;
</script>
</body>
</html>
